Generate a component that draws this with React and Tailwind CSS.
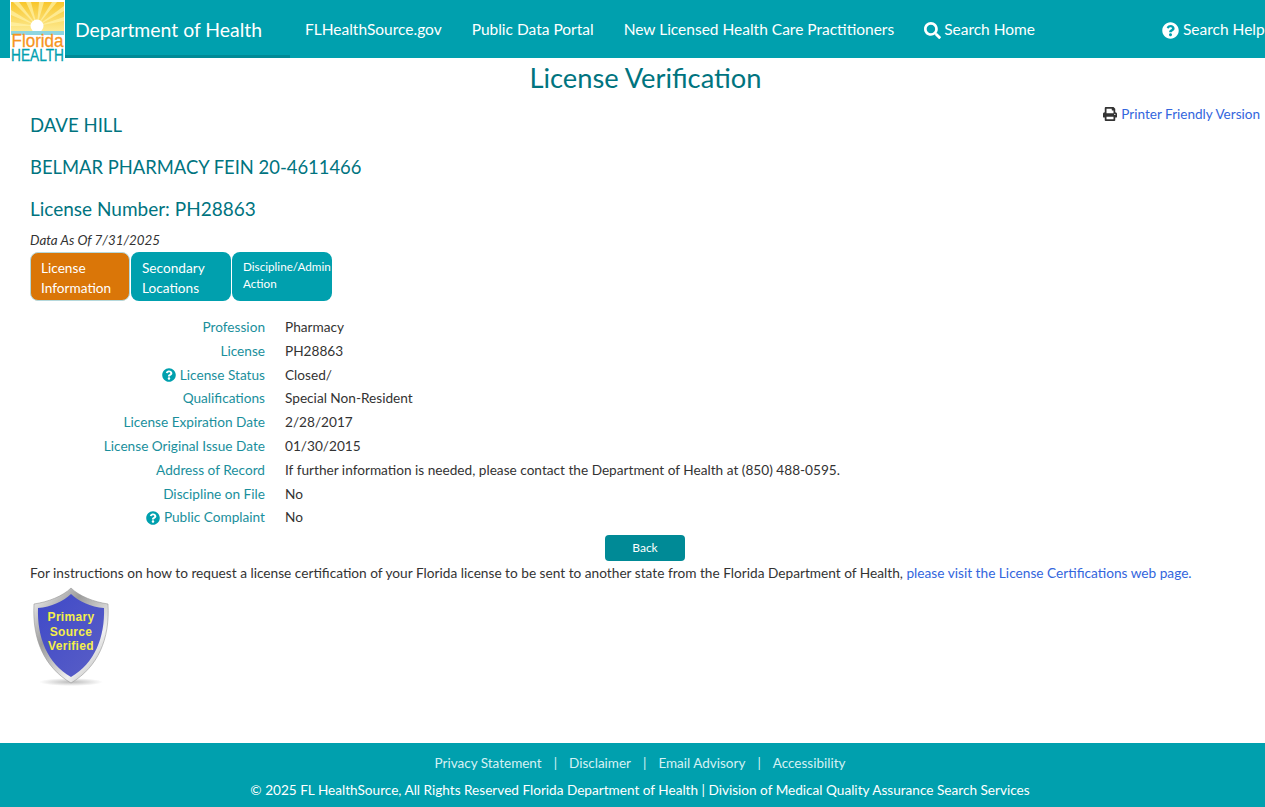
import React from 'react';
import { FaSearch, FaQuestionCircle, FaPrint } from 'react-icons/fa';

const rows = [
  { label: 'Profession', value: 'Pharmacy' },
  { label: 'License', value: 'PH28863' },
  { label: 'License Status', value: 'Closed/', help: true },
  { label: 'Qualifications', value: 'Special Non-Resident' },
  { label: 'License Expiration Date', value: '2/28/2017' },
  { label: 'License Original Issue Date', value: '01/30/2015' },
  { label: 'Address of Record', value: 'If further information is needed, please contact the Department of Health at (850) 488-0595.' },
  { label: 'Discipline on File', value: 'No' },
  { label: 'Public Complaint', value: 'No', help: true },
];

function Logo() {
  return (
    <svg width="55" height="62" viewBox="0 0 55 62" className="absolute left-[10px] top-0 z-10">
      <defs>
        <linearGradient id="sky" x1="0" y1="0" x2="0" y2="1">
          <stop offset="0" stopColor="#f8c62c" />
          <stop offset="1" stopColor="#fdeb94" />
        </linearGradient>
      </defs>
      <rect width="55" height="62" fill="#fff" />
      <rect x="1" y="2" width="53" height="30" fill="url(#sky)" />
      <path d="M27 26 L3 2 L9 2 Z M27 26 L16 2 L21 2 Z M27 26 L29 2 L34 2 Z M27 26 L42 2 L47 2 Z M27 26 L1 10 L1 15 Z M27 26 L54 6 L54 11 Z M27 26 L54 17 L54 21 Z M27 26 L1 22 L1 26 Z" fill="#fff2a8" opacity="0.7" />
      <circle cx="27" cy="26" r="6.5" fill="#fff" />
      <rect x="1" y="31" width="53" height="4" fill="#8fd6e0" />
      <text x="27.5" y="46.5" textAnchor="middle" fontSize="19" fill="#f7941d" stroke="#f7941d" strokeWidth="0.3" style={{ fontFamily: '"Liberation Sans", sans-serif' }} textLength="52" lengthAdjust="spacingAndGlyphs">Florida</text>
      <text x="27.5" y="60.5" textAnchor="middle" fontSize="17" fill="#00a0af" stroke="#00a0af" strokeWidth="0.3" style={{ fontFamily: '"Liberation Sans", sans-serif' }} textLength="53" lengthAdjust="spacingAndGlyphs">HEALTH</text>
    </svg>
  );
}

function Shield() {
  return (
    <svg width="80" height="100" viewBox="0 0 80 100" className="block">
      <defs>
        <linearGradient id="rim" x1="0" y1="0" x2="1" y2="1">
          <stop offset="0" stopColor="#f7f7f7" />
          <stop offset="0.35" stopColor="#9c9c9c" />
          <stop offset="0.7" stopColor="#f0f0f0" />
          <stop offset="1" stopColor="#a0a0a0" />
        </linearGradient>
        <linearGradient id="blue" x1="0" y1="0" x2="1" y2="1">
          <stop offset="0" stopColor="#3f49c8" />
          <stop offset="1" stopColor="#5a5fc6" />
        </linearGradient>
        <radialGradient id="shadow">
          <stop offset="0" stopColor="#bbb" />
          <stop offset="1" stopColor="#fff" />
        </radialGradient>
      </defs>
      <ellipse cx="40" cy="95" rx="32" ry="4" fill="url(#shadow)" />
      <path d="M40 1 C32 9 17 15 3 17 C1 52 13 80 40 96 C67 80 79 52 77 17 C63 15 48 9 40 1 Z" fill="url(#rim)" stroke="#999" strokeWidth="0.6" />
      <path d="M40 7 C33 14 20 20 7 21 C6 50 16 76 40 90 C64 76 74 50 73 21 C60 20 47 14 40 7 Z" fill="url(#blue)" />
      <g fill="#f5ee4a" fontSize="12" fontWeight="700" textAnchor="middle" letterSpacing="0.3" style={{ fontFamily: '"Liberation Sans", sans-serif' }}>
        <text x="40" y="34">Primary</text>
        <text x="40" y="48.5">Source</text>
        <text x="40" y="63">Verified</text>
      </g>
    </svg>
  );
}

export default function App() {
  return (
    <div className="relative min-h-[807px] flex flex-col bg-white overflow-hidden text-[13.65px] text-[#333]" style={{ fontFamily: 'Lato, "Noto Sans", sans-serif' }}>
      <Logo />
      <header className="relative h-[58px] pt-[2px] bg-[#00a0ae] flex items-center text-white whitespace-nowrap">
        <div className="absolute left-[65px] bottom-0 w-[225px] h-[3px] bg-[#008a96]" />
        <span className="ml-[75px] text-[19.4px] w-[230px]">Department of Health</span>
        <nav className="flex items-center text-[15.5px] gap-[30px]">
          <span>FLHealthSource.gov</span>
          <span>Public Data Portal</span>
          <span>New Licensed Health Care Practitioners</span>
          <span className="flex items-center gap-[3px]"><FaSearch size={17} />Search Home</span>
        </nav>
        <span className="absolute left-[1162px] flex items-center gap-[4px] text-[15.5px]"><FaQuestionCircle size={17} />Search Help</span>
      </header>

      <main className="flex-1 px-[30px] relative">
        <h1 className="text-center pl-[26px] text-[27.3px] leading-[40px] text-[#00747f]">License Verification</h1>
        <a className="absolute right-[5px] top-[46px] flex items-center gap-[4px] text-[13.55px] text-[#3366dd]">
          <FaPrint size={14} className="text-[#333]" />Printer Friendly Version
        </a>
        <div className="leading-[26px] text-[#00747f]">
          <h2 className="mt-[14px] text-[18.6px]">DAVE HILL</h2>
          <h2 className="mt-[16px] text-[18.4px]">BELMAR PHARMACY FEIN 20-4611466</h2>
          <h2 className="mt-[16px] text-[19px]">License Number: PH28863</h2>
        </div>
        <p className="italic mt-[8px] text-[13.4px] leading-[20px]">Data As Of 7/31/2025</p>
        <div className="flex gap-px mt-[2px] text-white">
          <div className="w-[100px] h-[49px] rounded-[8px] bg-[#da7608] border border-[#b5d8dc] px-[10px] py-[5px] leading-[20px]">License Information</div>
          <div className="w-[100px] h-[49px] rounded-[8px] bg-[#00a0ae] px-[11px] py-[6px] leading-[20px]">Secondary Locations</div>
          <div className="w-[100px] h-[49px] rounded-[8px] bg-[#00a0ae] pl-[11px] py-[6px] text-[11.7px] leading-[17px] overflow-hidden">Discipline/Admin Action</div>
        </div>
        <dl className="mt-[14.3px]">
          {rows.map((row) => (
            <div key={row.label} className="flex h-[23.8px] items-center">
              <dt className="w-[235px] flex items-center justify-end gap-[4px] text-[#1a8f9c] whitespace-nowrap">
                {row.help && <FaQuestionCircle size={14} className="text-[#00a0ae]" />}
                {row.label}
              </dt>
              <dd className="ml-[20px]">{row.value}</dd>
            </div>
          ))}
        </dl>
        <div className="flex justify-center pl-[25px] mt-[5.7px]">
          <button className="w-[80px] h-[26px] rounded-[4px] bg-[#008a96] text-white text-[12px]">Back</button>
        </div>
        <p className="mt-[2px] text-[13.68px] leading-[20px]">
          For instructions on how to request a license certification of your Florida license to be sent to another state from the Florida Department of Health, <a className="text-[#3366dd]">please visit the License Certifications web page.</a>
        </p>
        <div className="mt-[4px] ml-[1px]"><Shield /></div>
      </main>

      <footer className="h-[64px] bg-[#00a0ae] text-white flex flex-col items-center pl-[15px] pt-[10px]">
        <div className="flex gap-[12px] text-[13.5px] leading-[20px] text-[#d5f1f4]">
          <span>Privacy Statement</span><span>|</span><span>Disclaimer</span><span>|</span><span>Email Advisory</span><span>|</span><span>Accessibility</span>
        </div>
        <p className="mt-[7px] text-[13.6px] leading-[20px]">© 2025 FL HealthSource, All Rights Reserved Florida Department of Health | Division of Medical Quality Assurance Search Services</p>
      </footer>
    </div>
  );
}
